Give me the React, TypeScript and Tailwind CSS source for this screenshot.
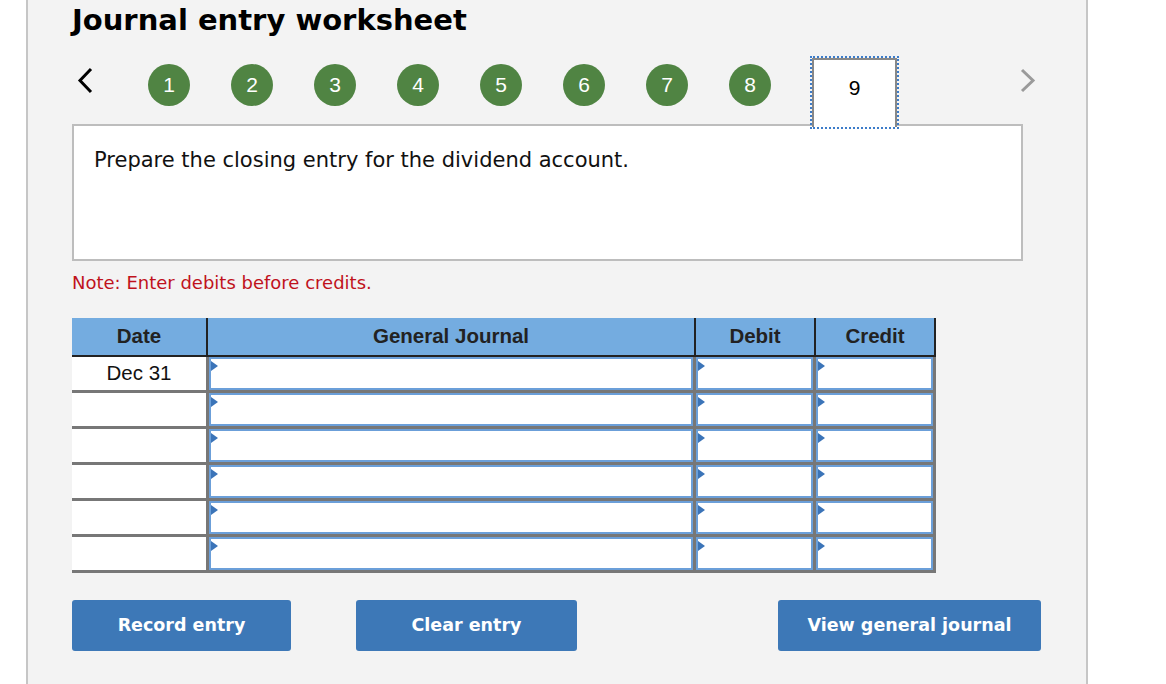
import React from 'react';

const VERDANA = { fontFamily: '"DejaVu Sans", Verdana, sans-serif' };
const ARIAL = { fontFamily: '"Liberation Sans", Arial, sans-serif' };

const steps = [1, 2, 3, 4, 5, 6, 7, 8];
const rows = ['Dec 31', '', '', '', '', ''];

function Marker() {
  return (
    <span className="absolute top-[2px] left-0 w-0 h-0 border-y-[5px] border-y-transparent border-l-[7px] border-l-[#3b74b8]" />
  );
}

function InputCell() {
  return (
    <div className="relative bg-white border-2 border-[#6b9fd9]">
      <Marker />
    </div>
  );
}

export default function App() {
  return (
    <div className="flex w-full h-[684px] bg-white overflow-hidden">
      <div className="w-[26px] shrink-0" />
      <div className="w-[1062px] shrink-0 h-full bg-[#f3f3f3] border-x-2 border-[#c6c6c6] pl-[44px]">
        {/* Title */}
        <h1 className="pt-[2px] text-[29px] leading-[36px] font-bold text-black" style={VERDANA}>
          Journal entry worksheet
        </h1>

        {/* Step navigation */}
        <div className="flex items-start mt-[20px] h-[66px]">
          <div className="w-[76px] shrink-0">
            <svg width="18" height="27" viewBox="0 0 18 27" className="ml-[4px] mt-[9px]">
              <polyline points="15,2 4,13.5 15,25" fill="none" stroke="#000" strokeWidth="3" />
            </svg>
          </div>
          <div className="flex gap-[41px]">
            {steps.map((n) => (
              <div
                key={n}
                className="mt-[6px] w-[42px] h-[42px] rounded-full bg-[#508443] text-white flex items-center justify-center text-[21px]"
                style={ARIAL}
              >
                {n}
              </div>
            ))}
            <div
              className="relative z-10 w-[85px] h-[69px] bg-white border-2 border-b-0 border-[#888] outline-2 outline-dotted outline-[#3d7cc9] text-center pt-[17px] text-[21px] leading-[22px] text-black"
              style={ARIAL}
            >
              9
            </div>
          </div>
          <svg width="18" height="27" viewBox="0 0 18 27" className="ml-[122px] mt-[10px]">
            <polyline points="3,2 14,12.5 3,23" fill="none" stroke="#9a9a9a" strokeWidth="3" />
          </svg>
        </div>

        {/* Question */}
        <div className="w-[951px] h-[137px] bg-white border-2 border-[#bdbdbd] pl-[20px] pt-[21px]">
          <p className="text-[21px] leading-[26px] text-[#111]" style={VERDANA}>
            Prepare the closing entry for the dividend account.
          </p>
        </div>

        <p className="mt-[11px] text-[18px] leading-[22px] text-[#c0121c]" style={VERDANA}>
          Note: Enter debits before credits.
        </p>

        {/* Journal table */}
        <div className="mt-[24px] w-[864px]" style={ARIAL}>
          <div className="grid grid-cols-[134px_486px_118px_118px] gap-x-[2px] pr-[2px] bg-[#222] border-b-2 border-[#222] h-[39px]">
            {['Date', 'General Journal', 'Debit', 'Credit'].map((h) => (
              <div key={h} className="bg-[#74ace0] flex items-center justify-center text-[20.5px] font-bold text-[#222]">
                {h}
              </div>
            ))}
          </div>
          {rows.map((d, i) => (
            <div
              key={i}
              className="grid grid-cols-[134px_484px_117px_117px] gap-x-[3px] pr-[3px] pb-[3px] bg-[#777] h-[36px]"
            >
              <div className="bg-white flex items-center justify-center text-[20.5px] text-[#111]">{d}</div>
              <InputCell />
              <InputCell />
              <InputCell />
            </div>
          ))}
        </div>

        {/* Actions */}
        <div className="flex mt-[27px] text-[17.5px] font-bold text-white" style={VERDANA}>
          <button className="w-[219px] h-[51px] rounded-[3px] bg-[#3d78b7]">Record entry</button>
          <button className="ml-[65px] w-[221px] h-[51px] rounded-[3px] bg-[#3d78b7]">Clear entry</button>
          <button className="ml-[201px] w-[263px] h-[51px] rounded-[3px] bg-[#3d78b7]">View general journal</button>
        </div>
      </div>
    </div>
  );
}
